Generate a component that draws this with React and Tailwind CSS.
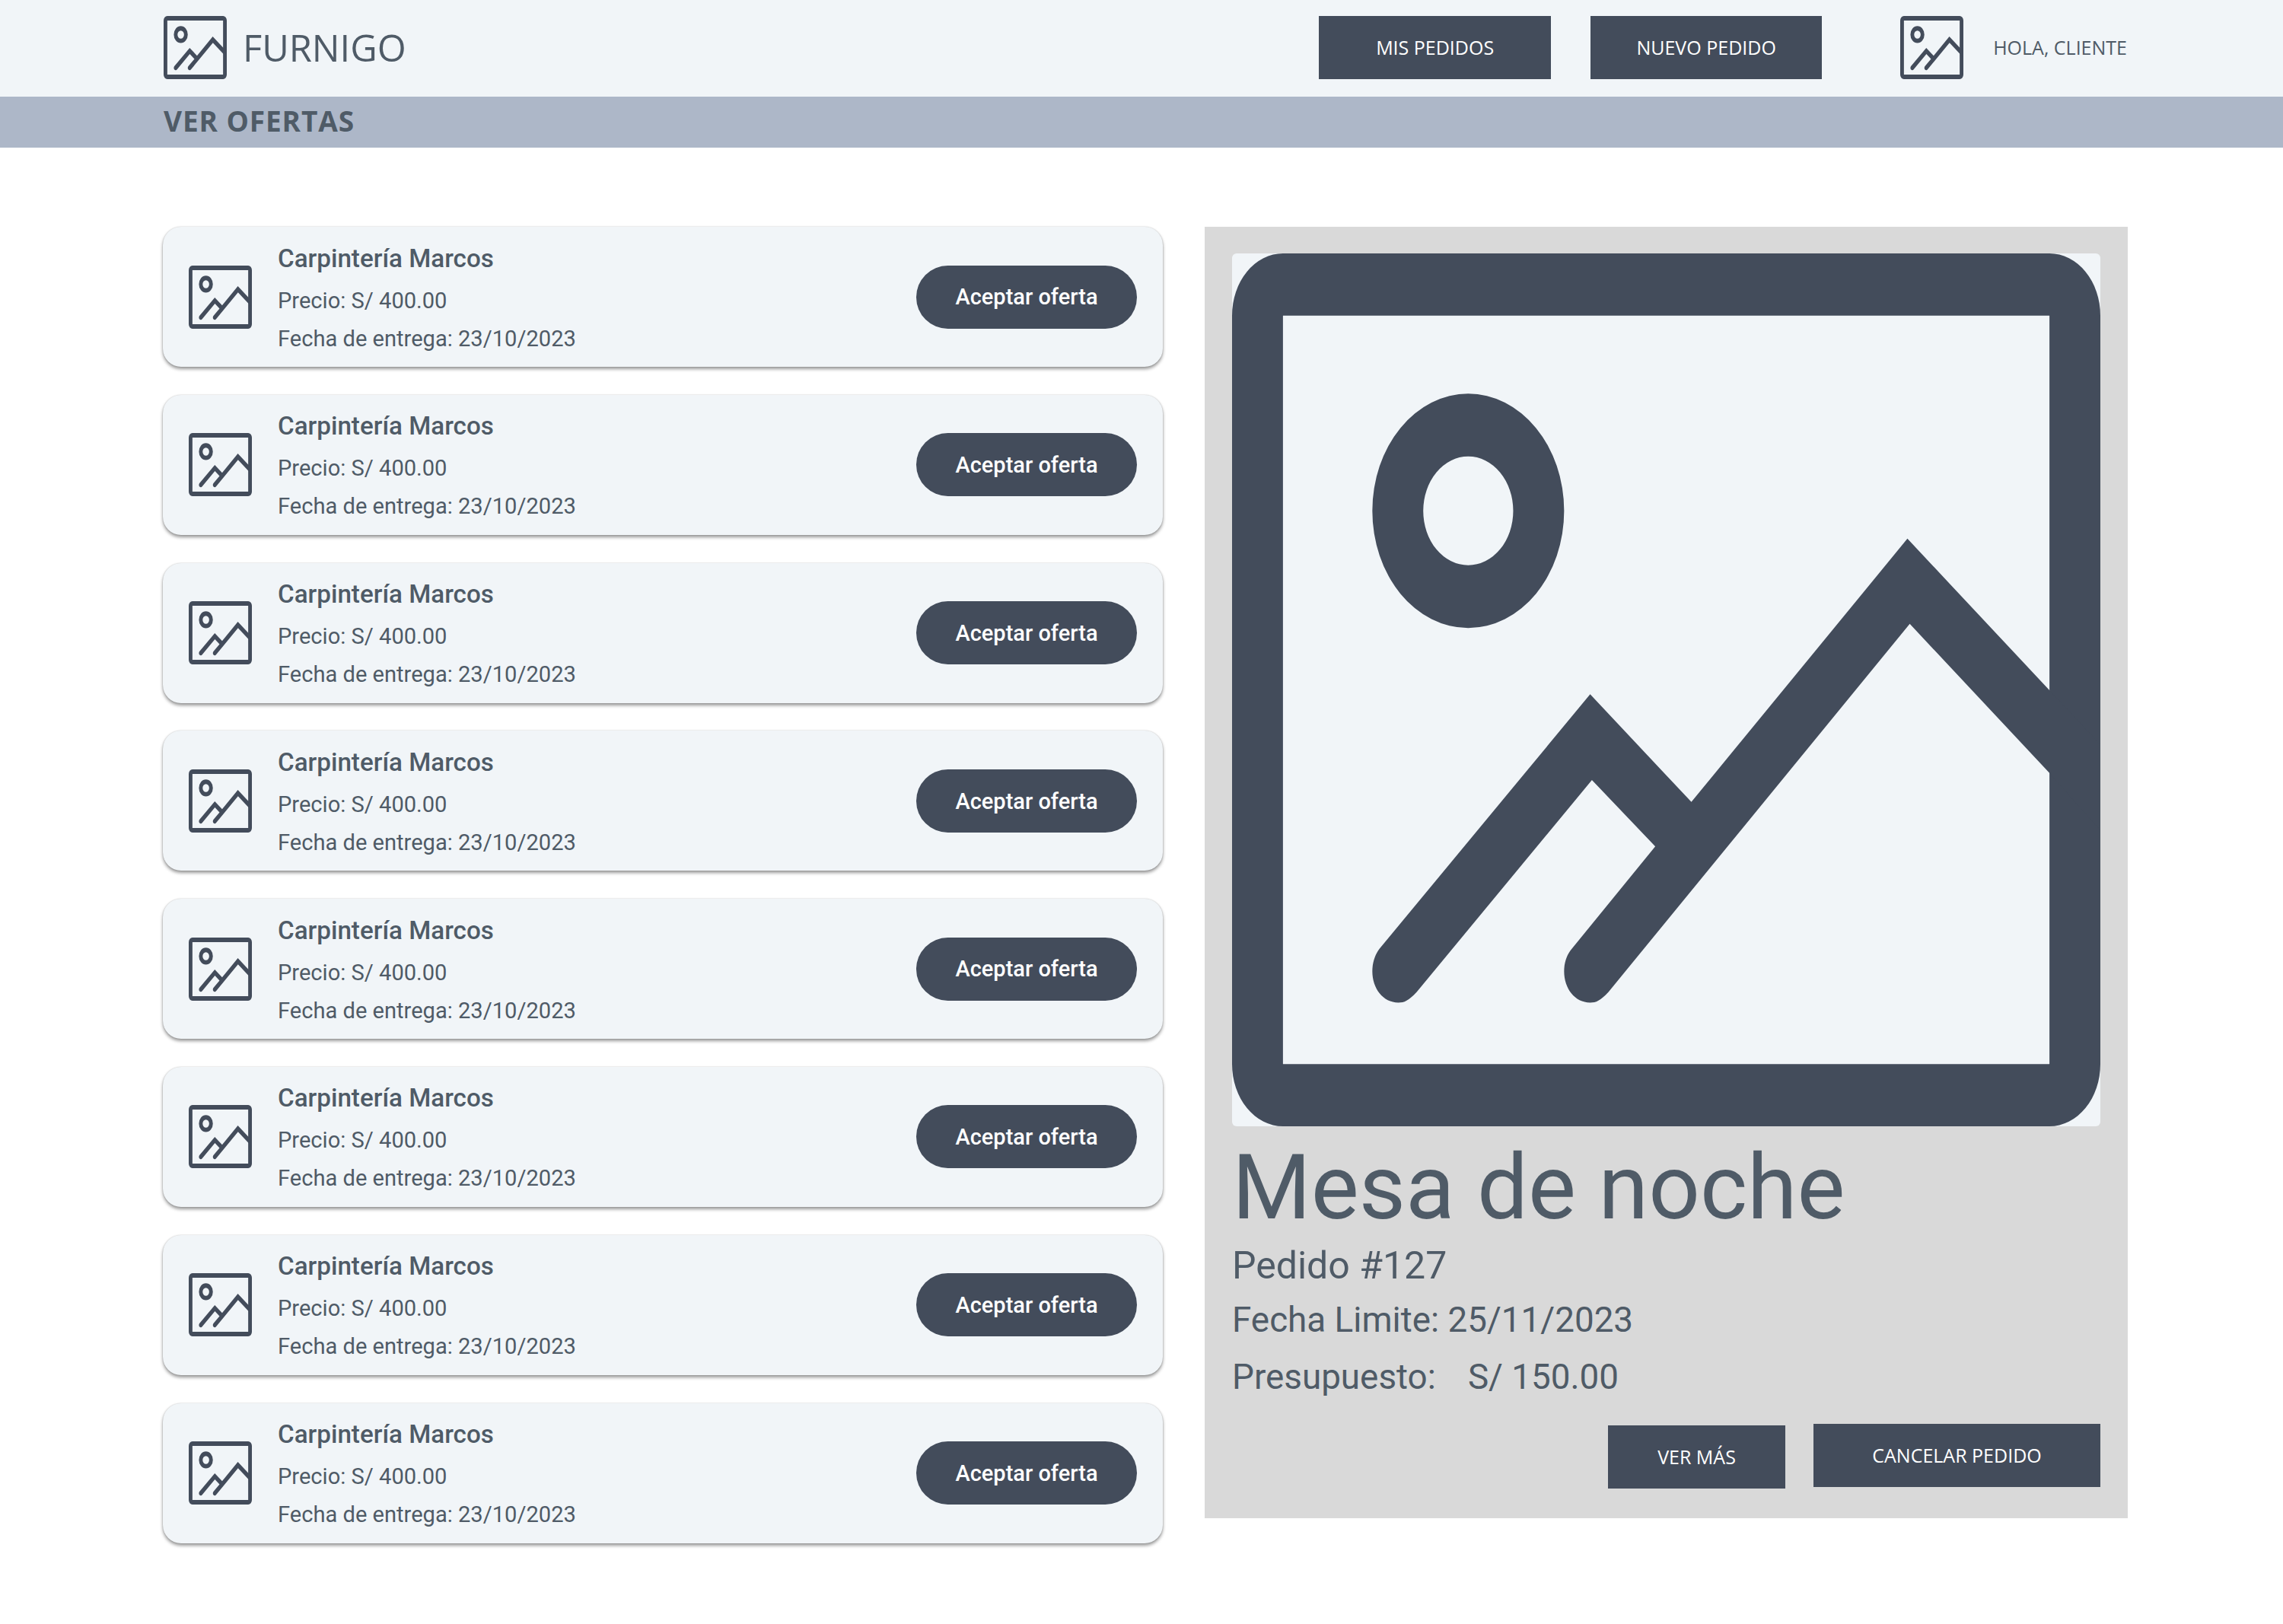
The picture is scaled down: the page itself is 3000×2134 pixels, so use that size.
import React from 'react';

// Placeholder picture icon, coordinates traced from the big one in the reference
function ImageIcon({ className }) {
    return (
        <svg viewBox="24 55 1467 1475" preserveAspectRatio="none" className={className} fill="#434c5b" fillRule="evenodd">
            <path d="M110 55H1405A86 105 0 0 1 1491 160V1425A86 105 0 0 1 1405 1530H110A86 105 0 0 1 24 1425V160A86 105 0 0 1 110 55ZM110 160V1425H1405V160Z" />
            <path d="M261 490A162 198 0 1 1 585 490A162 198 0 1 1 261 490ZM347 490A76 92 0 1 0 499 490A76 92 0 1 0 347 490Z" />
            <path d="M273 1230L629 800L800 982L1165 537L1405 793L1491 885V1030L1405 933L1169 681L660 1303C646 1318 639 1321 629 1321C603 1321 585 1297 585 1268C585 1253 590 1239 598 1230L739 1057L632 945L336 1303C322 1318 315 1321 305 1321C279 1321 261 1297 261 1268C261 1253 266 1239 273 1230Z" />
        </svg>
    );
}

function OfferCard() {
    return (
        <div className="h-[184px] flex items-center bg-[#f1f5f8] rounded-[24px] pl-[34px] pr-[34px] shadow-[0_3px_4px_rgba(0,0,0,0.4),0_0_2px_rgba(0,0,0,0.2)]">
            <ImageIcon className="w-[83px] h-[83px] shrink-0" />
            <div className="ml-[34px] pt-[4px] flex-1 font-['Roboto',sans-serif] text-[#4f5b67]">
                <div className="text-[33.2px] leading-[50px] font-medium">Carpintería Marcos</div>
                <div className="text-[29.1px] leading-[50px] mt-[5px]">Precio: S/ 400.00</div>
                <div className="text-[29.1px] leading-[50px]">Fecha de entrega: 23/10/2023</div>
            </div>
            <button className="w-[290px] h-[83px] pt-[2px] rounded-full bg-[#434c5b] text-white font-['Roboto',sans-serif] font-medium text-[29px]">
                Aceptar oferta
            </button>
        </div>
    );
}

export default function App() {
    const offers = [1, 2, 3, 4, 5, 6, 7, 8];

    return (
        <div className="min-h-[2134px] bg-white">
            {/* Header */}
            <header className="h-[127px] bg-[#f1f5f8] pl-[215px] pr-[205px] pb-[2px] flex items-center font-['Open_Sans',sans-serif]">
                <ImageIcon className="w-[83px] h-[83px]" />
                <span className="ml-[21px] mt-[1px] text-[48.8px] text-[#4f5b67]">FURNIGO</span>
                <div className="ml-auto flex items-center">
                    <button className="w-[305px] h-[83px] bg-[#434c5b] text-white text-[25px]">MIS PEDIDOS</button>
                    <button className="w-[304px] h-[83px] ml-[52px] bg-[#434c5b] text-white text-[25px]">NUEVO PEDIDO</button>
                    <ImageIcon className="w-[83px] h-[83px] ml-[103px]" />
                    <span className="ml-[39px] text-[25px] text-[#4f5b67]">HOLA, CLIENTE</span>
                </div>
            </header>
            <div className="h-[67px] pb-[3px] bg-[#adb7c8] pl-[215px] flex items-center font-['Open_Sans',sans-serif] text-[37px] tracking-[0.9px] font-bold text-[#4f5b67]">
                VER OFERTAS
            </div>

            <main className="flex items-start pl-[214px] pr-[204px] pt-[104px]">
                {/* Offers */}
                <div className="w-[1314px] flex flex-col gap-[36.8px]">
                    {offers.map((id) => <OfferCard key={id} />)}
                </div>

                {/* Order detail */}
                <div className="w-[1213px] h-[1697px] ml-[55px] bg-[#d9d9d9] pt-[35px] px-[36px] font-['Roboto',sans-serif] text-[#4f5b67]">
                    <div className="h-[1147px] bg-[#f1f5f8] rounded-[6px]">
                        <ImageIcon className="w-full h-full" />
                    </div>
                    <div className="text-[118.8px] leading-[140px] mt-[11px]">Mesa de noche</div>
                    <div className="text-[50px] leading-[64px]">Pedido #127</div>
                    <div className="text-[45.8px] leading-[80px]">Fecha Limite: 25/11/2023</div>
                    <div className="text-[45.8px] leading-[70px] whitespace-pre">
                        Presupuesto:   <span className="ml-[8px]">S/ 150.00</span>
                    </div>
                    <div className="flex justify-end items-start gap-[37px] mt-[26px] font-['Open_Sans',sans-serif] text-white text-[25px]">
                        <button className="w-[233px] h-[83px] mt-[2px] bg-[#434c5b]">VER MÁS</button>
                        <button className="w-[377px] h-[83px] bg-[#434c5b]">CANCELAR PEDIDO</button>
                    </div>
                </div>
            </main>
        </div>
    );
}
